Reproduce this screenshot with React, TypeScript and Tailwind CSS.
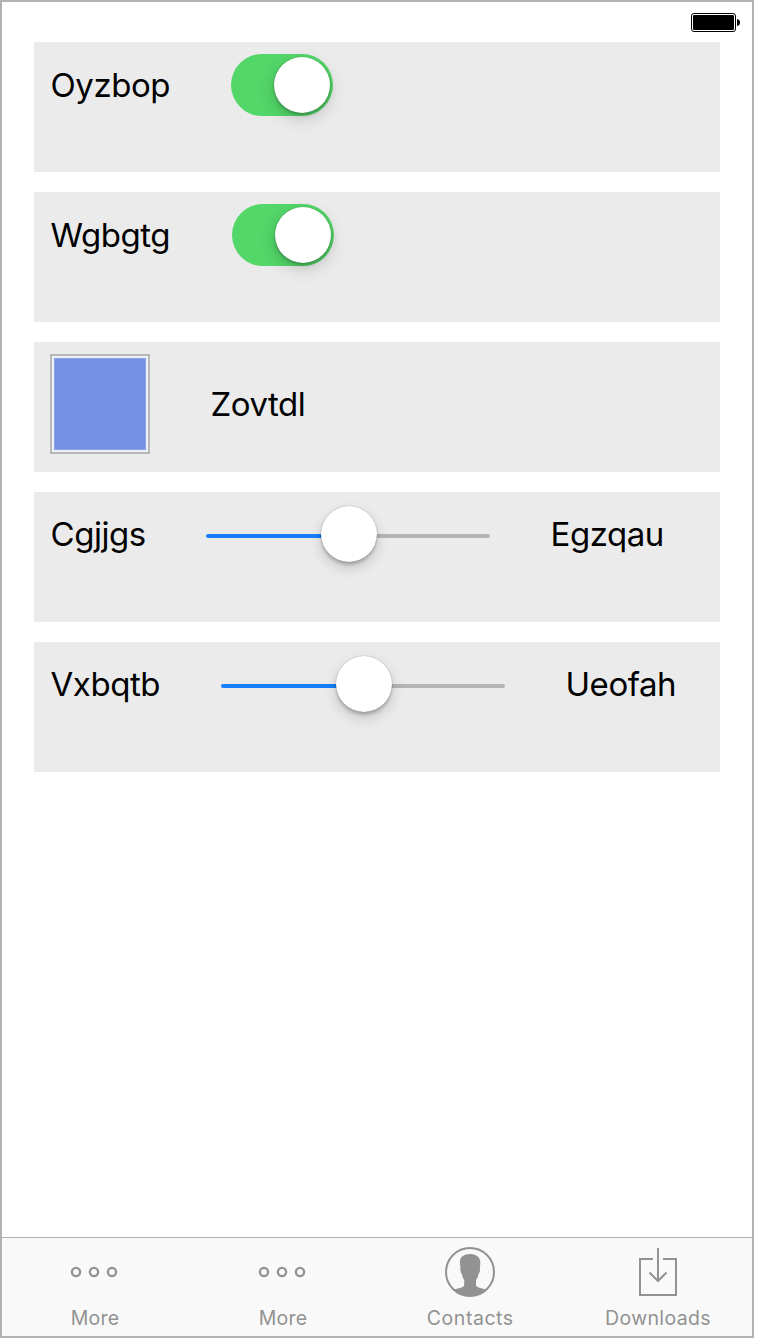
import type { ReactNode } from "react";

function Card({ children }: { children: ReactNode }) {
  return <section className="flex h-[130px] items-start bg-[#ebebeb] pt-3 pl-4">{children}</section>;
}

function Row({ children, className }: { children: ReactNode; className: string }) {
  return <div className={`flex items-center gap-[60px] ${className}`}>{children}</div>;
}

function Label({ children, className }: { children: ReactNode; className: string }) {
  return (
    <span
      className={`shrink-0 whitespace-nowrap pl-[0.5px] text-[33px] leading-[40px] tracking-[-0.45px] text-black ${className}`}
    >
      {children}
    </span>
  );
}

function Switch() {
  return (
    <div className="flex h-[62px] w-[102px] shrink-0 items-center justify-end rounded-full bg-[#53d769] pr-[3px]">
      <div className="size-14 rounded-full bg-white shadow-[0_6px_16px_4px_rgba(0,0,0,0.08),0_4px_10px_rgba(0,0,0,0.1),0_2px_3px_rgba(0,0,0,0.2),0_0_1px_rgba(0,0,0,0.25)]" />
    </div>
  );
}

function Slider() {
  return (
    <div className="flex h-[60px] w-[284px] shrink-0 items-center">
      <div className="mt-1 h-1 w-[116px] rounded-l-full bg-[#157efb]" />
      <div className="z-10 -mx-px size-14 shrink-0 rounded-full bg-white shadow-[0_6px_13px_rgba(0,0,0,0.17),0_3px_3px_rgba(0,0,0,0.18),0_0_1px_rgba(0,0,0,0.4)]" />
      <div className="mt-1 h-1 flex-1 rounded-r-full bg-[#b5b5b5]" />
    </div>
  );
}

function MoreIcon() {
  return (
    <svg width="48" height="50" viewBox="0 0 48 50" fill="none" stroke="#929292" strokeWidth="2.3">
      <circle cx="6" cy="25" r="4.1" />
      <circle cx="24" cy="25" r="4.1" />
      <circle cx="42" cy="25" r="4.1" />
    </svg>
  );
}

function ContactsIcon() {
  return (
    <svg width="50" height="50" viewBox="0 0 50 50">
      <circle cx="25" cy="25" r="24" fill="none" stroke="#929292" strokeWidth="2" />
      <path
        fill="#929292"
        d="M8.5 42.8C13 40.7 18 41 19.2 38.4V33C17.8 31 17.1 29 16.8 26.8C15.4 25.6 15.1 22.2 15.5 20.6C14.4 15.5 14.6 11.2 17.6 9.3C21 6.4 28.4 6.4 32 8.9C35.8 11.2 35.6 15.5 34.9 20.6C35.3 22.2 35 25.6 33.6 26.8C33.3 29 32.6 31 31 33V38.4C32.2 41 37 40.7 41.5 42.8C32 51.2 18 51.2 8.5 42.8Z"
      />
    </svg>
  );
}

function DownloadsIcon() {
  return (
    <svg width="40" height="50" viewBox="0 0 40 50" fill="none" stroke="#929292" strokeWidth="2">
      <path d="M15 12H2V48H38V12H25M20 1V34M11.5 25.5L20 34L28.5 25.5" />
    </svg>
  );
}

function Tab({ icon, label, className }: { icon: ReactNode; label: string; className: string }) {
  return (
    <div className="flex w-[188px] flex-col items-center pt-[9px] text-[#929292]">
      {icon}
      <span className={`mt-[9px] whitespace-nowrap text-[19.5px] leading-6 ${className}`}>{label}</span>
    </div>
  );
}

export default function App() {
  return (
    <div className="h-[1340px] w-[760px] bg-white font-['Inter',sans-serif]">
      <div className="flex h-[1338px] w-[754px] flex-col border-2 border-[#b2b2b2] bg-white">
        <header className="flex h-10 items-start justify-end pt-[11px] pr-3">
          <svg width="49" height="19" viewBox="0 0 49 19">
            <rect x="0.5" y="0.5" width="44" height="18" rx="2.5" fill="white" stroke="black" />
            <rect x="2" y="2" width="41" height="15" rx="1.2" />
            <path d="M46 6C48 6.3 49 7.5 49 9.5C49 11.5 48 12.7 46 13Z" />
          </svg>
        </header>

        <main className="flex flex-1 flex-col gap-5 pr-8 pl-8">
          <Card>
            <Row className="h-[62px]">
              <Label className="w-[121px]">Oyzbop</Label>
              <Switch />
            </Row>
          </Card>
          <Card>
            <Row className="h-[62px]">
              <Label className="w-[122px]">Wgbgtg</Label>
              <Switch />
            </Row>
          </Card>
          <Card>
            <Row className="h-[100px]">
              <div className="size-[100px] border-2 border-[#b8b8b8] bg-[#eeeff5] p-0.5">
                <div className="size-full border border-[#8fa3e7] bg-[#758fe2]" />
              </div>
              <Label className="w-[97px]">Zovtdl</Label>
            </Row>
          </Card>
          <Card>
            <Row className="h-[60px]">
              <Label className="w-[96px]">Cgjjgs</Label>
              <Slider />
              <Label className="w-[114px]">Egzqau</Label>
            </Row>
          </Card>
          <Card>
            <Row className="h-[60px]">
              <Label className="w-[111px]">Vxbqtb</Label>
              <Slider />
              <Label className="w-[112px]">Ueofah</Label>
            </Row>
          </Card>
        </main>

        <nav className="h-[99px] border-t border-[#b2b2b2] bg-[#f9f9f9]">
          <div className="-ml-0.5 flex">
            <Tab icon={<MoreIcon />} label="More" className="pl-[2px] tracking-[0.2px]" />
            <Tab icon={<MoreIcon />} label="More" className="pl-[2px] tracking-[0.2px]" />
            <Tab icon={<ContactsIcon />} label="Contacts" className="pl-[0.5px] tracking-[0.55px]" />
            <Tab icon={<DownloadsIcon />} label="Downloads" className="tracking-[0.35px]" />
          </div>
        </nav>
      </div>
    </div>
  );
}
